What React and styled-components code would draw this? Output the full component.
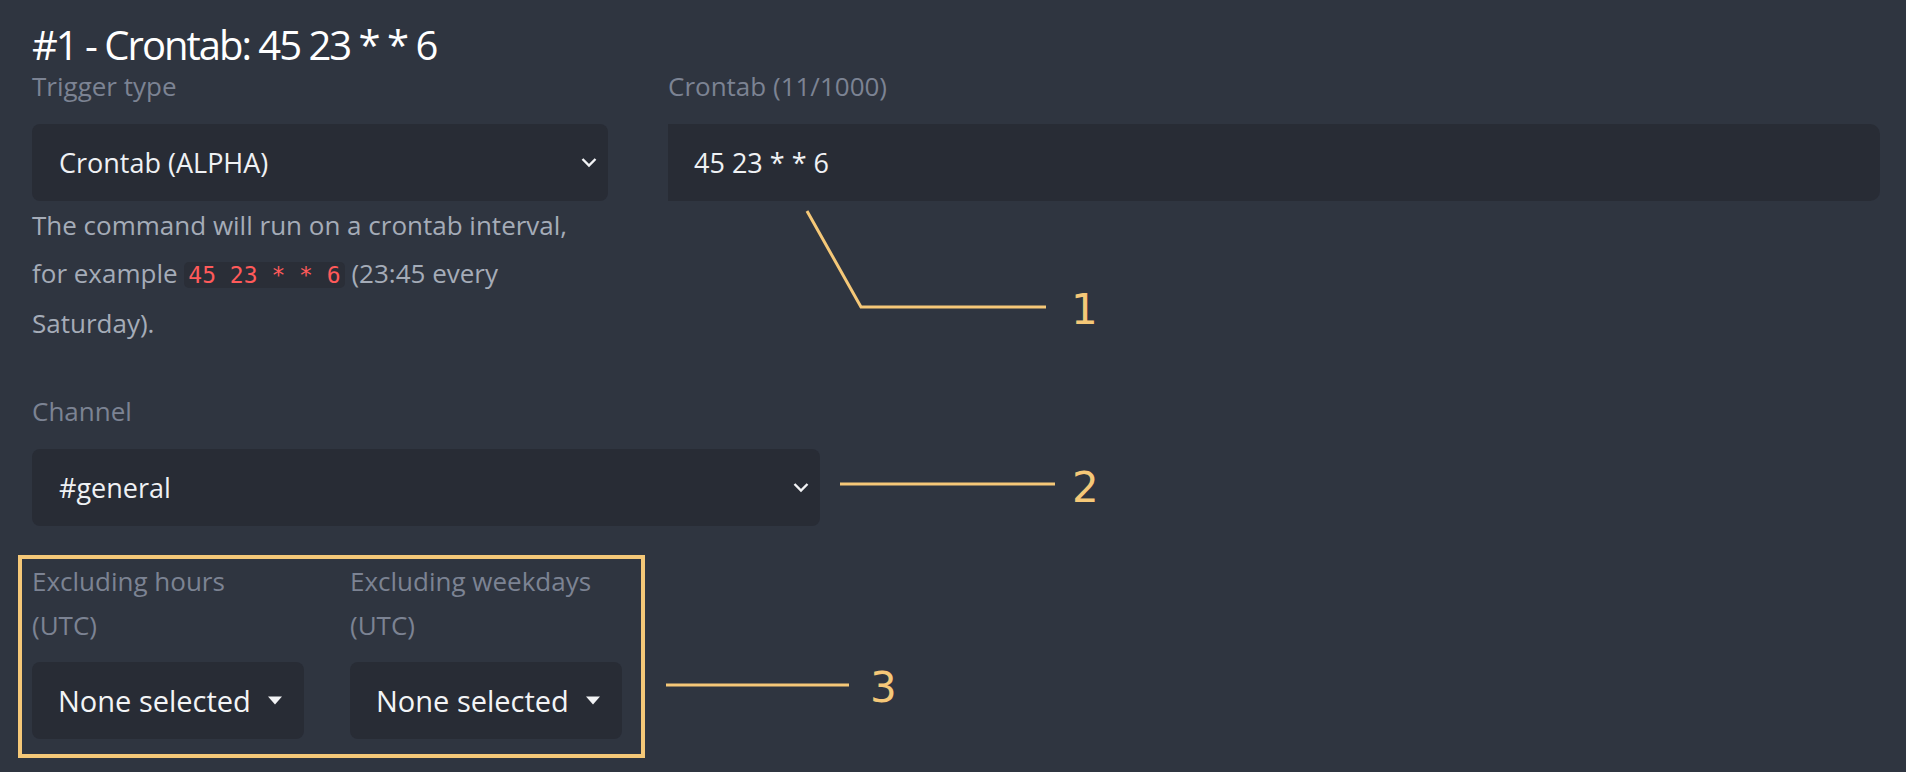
import React from "react";
import styled, { createGlobalStyle } from "styled-components";

const Global = createGlobalStyle`
  html, body { margin: 0; padding: 0; background: #2f3540; }
  body { font-family: "Open Sans", "Noto Sans", sans-serif; }
  * { box-sizing: border-box; }
`;

const Page = styled.div`
  position: relative;
  width: 1906px;
  height: 772px;
  overflow: hidden;
  background: #2f3540;
  padding: 22px 26px 0 32px;
  display: flex;
  flex-direction: column;
`;

const Title = styled.h1`
  margin: 0;
  font-size: 40px;
  line-height: 46px;
  font-weight: 400;
  letter-spacing: -2px;
  color: #ffffff;
  white-space: nowrap;
`;

const TopRow = styled.div`
  display: flex;
  gap: 60px;
`;

const Column = styled.div`
  display: flex;
  flex-direction: column;
  width: ${(p) => (p.$width ? `${p.$width}px` : "auto")};
  flex: ${(p) => (p.$width ? "0 0 auto" : "1 1 auto")};
`;

const Field = styled.div`
  display: flex;
  flex-direction: column;
  margin-top: ${(p) => p.$mt || 0}px;
  width: ${(p) => (p.$width ? `${p.$width}px` : "auto")};
`;

const Label = styled.label`
  display: block;
  font-size: 26px;
  line-height: ${(p) => (p.$lh ? p.$lh : 36)}px;
  color: #7c8393;
  margin-bottom: ${(p) => (p.$mb !== undefined ? p.$mb : 20)}px;
  white-space: nowrap;
`;

const Select = styled.div`
  height: 77px;
  width: ${(p) => (p.$width ? `${p.$width}px` : "100%")};
  background: #282c35;
  border-radius: 8px;
  display: flex;
  align-items: center;
  justify-content: space-between;
  padding: 0 11px 0 27px;
  font-size: 27px;
  color: #eff1f4;
`;

const TextInput = styled.div`
  height: 77px;
  background: #282c35;
  border-radius: 0 10px 10px 0;
  display: flex;
  align-items: center;
  padding: 0 26px;
  font-size: 27px;
  color: #eff1f4;
  white-space: pre;
`;

const Help = styled.p`
  margin: 0;
  font-size: 26px;
  line-height: 48px;
  color: #a5acb8;
  white-space: nowrap;
`;

const Code = styled.code`
  font-family: "DejaVu Sans Mono", "Liberation Mono", monospace;
  font-size: 23px;
  color: #ff5a5a;
  background: #2a2e37;
  border-radius: 5px;
  padding: 0 4px;
  white-space: pre;
`;

const Highlight = styled.div`
  margin-top: 29px;
  margin-left: -14px;
  width: 627px;
  border: 4px solid #f5c878;
  padding: 0 19px 15px 10px;
  display: flex;
  gap: 46px;
`;

const ExcludeCol = styled.div`
  display: flex;
  flex-direction: column;
  width: 272px;
`;

const Dropdown = styled.div`
  height: 77px;
  width: 272px;
  background: #282c35;
  border-radius: 8px;
  display: flex;
  align-items: center;
  gap: 17px;
  padding: 0 0 0 26px;
  font-size: 29px;
  color: #f3f4f6;
  white-space: nowrap;
`;

const Overlay = styled.svg`
  position: absolute;
  left: 0;
  top: 0;
  pointer-events: none;
`;

const Num = styled.text`
  font-family: "DejaVu Sans", "Verdana", sans-serif;
  font-size: 42px;
  fill: #f5c878;
`;

const Chevron = () => (
  <svg width="16" height="11" viewBox="0 0 16 11">
    <polyline points="1.5,2 8,8.5 14.5,2" fill="none" stroke="#f2f3f5" strokeWidth="2.4" />
  </svg>
);

const Caret = () => (
  <svg width="14" height="9" viewBox="0 0 14 9">
    <polygon points="0,0.5 14,0.5 7,8.5" fill="#f2f3f5" />
  </svg>
);

export default function App() {
  return (
    <>
      <Global />
      <Page>
        <Title>#1 - Crontab: 45 23 * * 6</Title>
        <TopRow>
          <Column $width={576}>
            <Label>Trigger type</Label>
            <Select>
              <span>Crontab (ALPHA)</span>
              <Chevron />
            </Select>
            <Help>
              The command will run on a crontab interval,
              <br />
              for example <Code>45 23 * * 6</Code> (23:45 every
              <br />
              Saturday).
            </Help>
          </Column>
          <Column>
            <Label>Crontab (11/1000)</Label>
            <TextInput>45 23 * * 6</TextInput>
          </Column>
        </TopRow>

        <Field $mt={46} $width={788}>
          <Label>Channel</Label>
          <Select $width={788}>
            <span>#general</span>
            <Chevron />
          </Select>
        </Field>

        <Highlight>
          <ExcludeCol>
            <Label $lh={44} $mb={15}>
              Excluding hours
              <br />
              (UTC)
            </Label>
            <Dropdown>
              <span>None selected</span>
              <Caret />
            </Dropdown>
          </ExcludeCol>
          <ExcludeCol>
            <Label $lh={44} $mb={15}>
              Excluding weekdays
              <br />
              (UTC)
            </Label>
            <Dropdown>
              <span>None selected</span>
              <Caret />
            </Dropdown>
          </ExcludeCol>
        </Highlight>

        <Overlay width="1906" height="772" viewBox="0 0 1906 772">
          <polyline
            points="807,211 861,307 1046,307"
            fill="none"
            stroke="#f5c878"
            strokeWidth="3"
          />
          <line x1="840" y1="484" x2="1055" y2="484" stroke="#f5c878" strokeWidth="3" />
          <line x1="666" y1="685" x2="849" y2="685" stroke="#f5c878" strokeWidth="3" />
          <Num x="1071" y="324">1</Num>
          <Num x="1072" y="502">2</Num>
          <Num x="870" y="702">3</Num>
        </Overlay>
      </Page>
    </>
  );
}
